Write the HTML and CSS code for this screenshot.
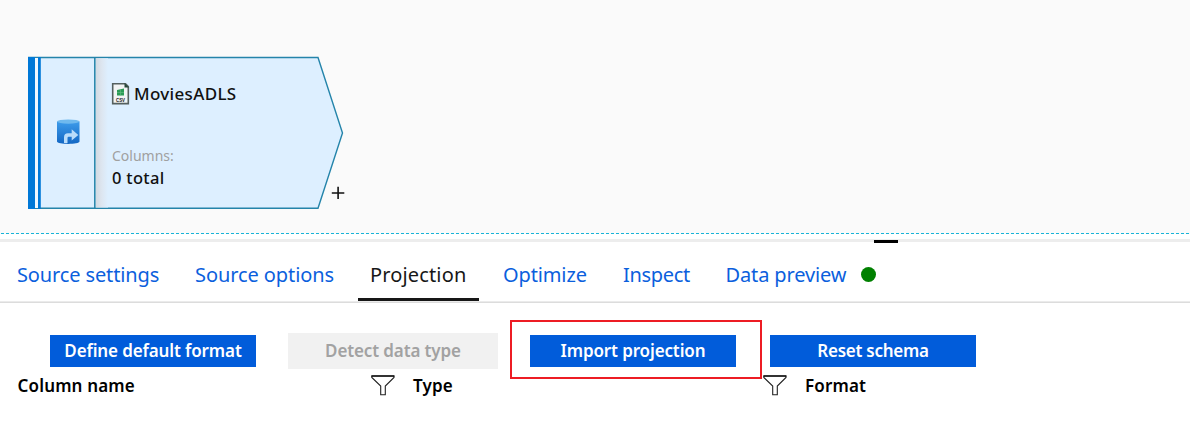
FILE: index.html
```html
<!DOCTYPE html>
<html lang="en">
<head>
<meta charset="utf-8">
<title>Data flow</title>
<link rel="stylesheet" href="styles.css">
</head>
<body>
<main class="page">
  <section class="canvas">
    <div class="node">
      <svg class="node-shape" width="318" height="156" viewBox="26 55 318 156">
        <defs>
          <linearGradient id="fold"><stop offset="0" stop-color="#d3d9e1"/><stop offset=".5" stop-color="#dde6f0"/><stop offset="1" stop-color="#ddefff"/></linearGradient>
          <linearGradient id="db" x2="0" y2="1"><stop offset="0" stop-color="#3d9bea"/><stop offset="1" stop-color="#1267c4"/></linearGradient>
        </defs>
        <path d="M28.700 57.500H318L342.500 133L318 208.300H28.700Z" fill="#ddefff" stroke="#2484aa" stroke-width="1.4"/>
        <path d="M95.500 58.200H108V207.600H95.500Z" fill="url(#fold)"/>
        <path d="M94.800 57V209" stroke="#2484aa" stroke-width="1.5"/>
        <path d="M28 57H35V209H28ZM38 57H40.800V209H38Z" fill="#0078d7"/>
        <path d="M35 58H38V208H35Z" fill="#eff8ff"/>
        <path d="M57 121.500V141.500C57 144.700 79.500 144.700 79.500 141.500V121.500Z" fill="url(#db)"/>
        <ellipse cx="68.250" cy="121.600" rx="11.250" ry="2.100" fill="#6fb9ee"/>
        <path d="M64 143V137.500Q64 133.300 68 133.300H71.700V129.200L78.300 135L71.700 140.500V136.700H68.500Q67.500 136.700 67.500 138V143Z" fill="#b9dcfa"/>
        <path d="M112.700 83.700H125.500L128.300 86.500V103.600H112.700Z" fill="#f2f4f4" stroke="#55605f" stroke-width="1.6"/>
        <path d="M124.500 83V87.500H129Z" fill="#27473a"/>
        <path d="M117 90L124 88.500V95.500H117Z" fill="#2b9b56"/>
        <path d="M117 92.500H124M120.500 89V95.500" stroke="#66be83" stroke-width=".6"/>
        <text class="csv" x="116" y="101.800" textLength="9" lengthAdjust="spacingAndGlyphs">CSV</text>
      </svg>
      <div class="node-content">
        <span class="node-title">MoviesADLS</span>
        <span class="node-label">Columns:</span>
        <span class="node-total">0 total</span>
      </div>
      <svg class="plus" width="14" height="14" viewBox="0 0 14 14"><path d="M.8 7H13.300M7.100 .8V13" fill="none" stroke="#111" stroke-width="1.6"/></svg>
    </div>
  </section>
  <div class="splitter"><span class="grip"></span></div>
  <nav class="tabs">
    <a class="tab t1"><span>Source settings</span></a>
    <a class="tab t2"><span>Source options</span></a>
    <a class="tab t3 active"><span>Projection</span></a>
    <a class="tab t4"><span>Optimize</span></a>
    <a class="tab t5"><span>Inspect</span></a>
    <a class="tab t6"><span>Data preview</span></a>
    <i class="status"></i>
  </nav>
  <section class="actions">
    <button class="btn b1">Define default format</button>
    <button class="btn disabled b2" disabled>Detect data type</button>
    <div class="highlight"><button class="btn b3">Import projection</button></div>
    <button class="btn b4">Reset schema</button>
  </section>
  <section class="columns">
    <div class="col first"><span class="c1">Column name</span></div>
    <div class="col"><svg width="24" height="22" viewBox="0 0 24 22"><path d="M.8 1H23V2.500L14.300 11V19.700H9.700V11L.8 2.500Z" fill="#fff" stroke="#222" stroke-width="1.1"/><path d="M.5 1H23.300" stroke="#000" stroke-width="1.3"/></svg><span class="c2">Type</span></div>
    <div class="col"><svg width="24" height="22" viewBox="0 0 24 22"><path d="M.8 1H23V2.500L14.300 11V19.700H9.700V11L.8 2.500Z" fill="#fff" stroke="#222" stroke-width="1.1"/><path d="M.5 1H23.300" stroke="#000" stroke-width="1.3"/></svg><span class="c3">Format</span></div>
  </section>
</main>
</body>
</html>
```
FILE: styles.css
```css
* { box-sizing: border-box; }
body { margin: 0; background: #fff; font-family: "Noto Sans", "Open Sans", sans-serif; }
.page { width: 1190px; height: 433px; overflow: hidden; display: flex; flex-direction: column; }
.canvas { position: relative; height: 234px; flex: none; background: repeating-linear-gradient(90deg, transparent 0 1px, #18b4d8 1px 4px, transparent 4px 5px) 0 233px / 100% 1px no-repeat #fafafa; }
.node { position: absolute; left: 26px; top: 55px; width: 320px; height: 156px; }
.node-shape { display: block; }
.csv { font: bold 4.6px "Liberation Sans", sans-serif; fill: #222; }
.node-content { position: absolute; left: 86px; top: 26px; display: flex; flex-direction: column; white-space: nowrap; }
.node-title { margin-left: 22px; font-size: 17px; font-weight: 500; line-height: 26px; letter-spacing: .33px; color: #111; }
.node-label { margin-top: 39px; font-size: 14px; line-height: 20px; color: #a0a0a0; }
.node-total { font-size: 16.5px; font-weight: 500; line-height: 24px; letter-spacing: .3px; color: #111; }
.plus { position: absolute; left: 305px; top: 131px; }
.splitter { height: 8px; flex: none; padding-top: 5px; background: linear-gradient(#ededed, #ededed) 0 5px / 100% 3px no-repeat; }
.grip { display: block; position: relative; top: 1px; width: 24px; height: 3px; margin-left: 874px; background: #000; }
.tabs { height: 61px; flex: none; display: flex; padding-left: 5px; border-bottom: 1px solid #dcdcdc; box-shadow: inset 0 -1px #ebebeb; }
.tab { display: block; height: 59px; padding: 0 12px; font-size: 20px; line-height: 65px; letter-spacing: -.13px; color: #0b5fdd; white-space: nowrap; }
.t1 { width: 178px; }
.t2 { width: 175px; letter-spacing: -.08px; }
.t3 { width: 121px; margin-right: 12px; letter-spacing: .15px; }
.t4 { width: 120px; }
.t5 { width: 102.500px; letter-spacing: -.3px; }
.t6 { width: 142px; }
.tab.active { color: #171717; border-bottom: 3px solid #171717; }
.status { width: 15px; height: 15px; margin: 25px 0 0 5.500px; border-radius: 50%; background: #008000; }
.actions { display: flex; align-items: center; height: 59px; flex: none; margin-top: 17px; padding-left: 50px; }
.btn { width: 206px; height: 32px; flex: none; margin: 2px 0 0; padding: 0; border: 0; background: #015cda; color: #fff; font: 600 17px/32px "Noto Sans", "Open Sans", sans-serif; letter-spacing: -.12px; white-space: nowrap; }
.btn.b4 { letter-spacing: -.25px; }
.btn.disabled { width: 210px; height: 36px; margin: 2px 12px 0 32px; background: #f1f1f1; color: #a2a2a2; }
.highlight { width: 252px; height: 59px; flex: none; margin-right: 8px; padding: 11px 0 0 18px; border: 2px solid #ed1c24; }
.columns { display: grid; grid-template-columns: 353.500px 392px auto; padding-left: 17.500px; margin-top: -6px; font-size: 17px; line-height: 25px; font-weight: 600; letter-spacing: .16px; color: #000; }
.col { display: flex; align-items: center; gap: 18px; white-space: nowrap; }
```
